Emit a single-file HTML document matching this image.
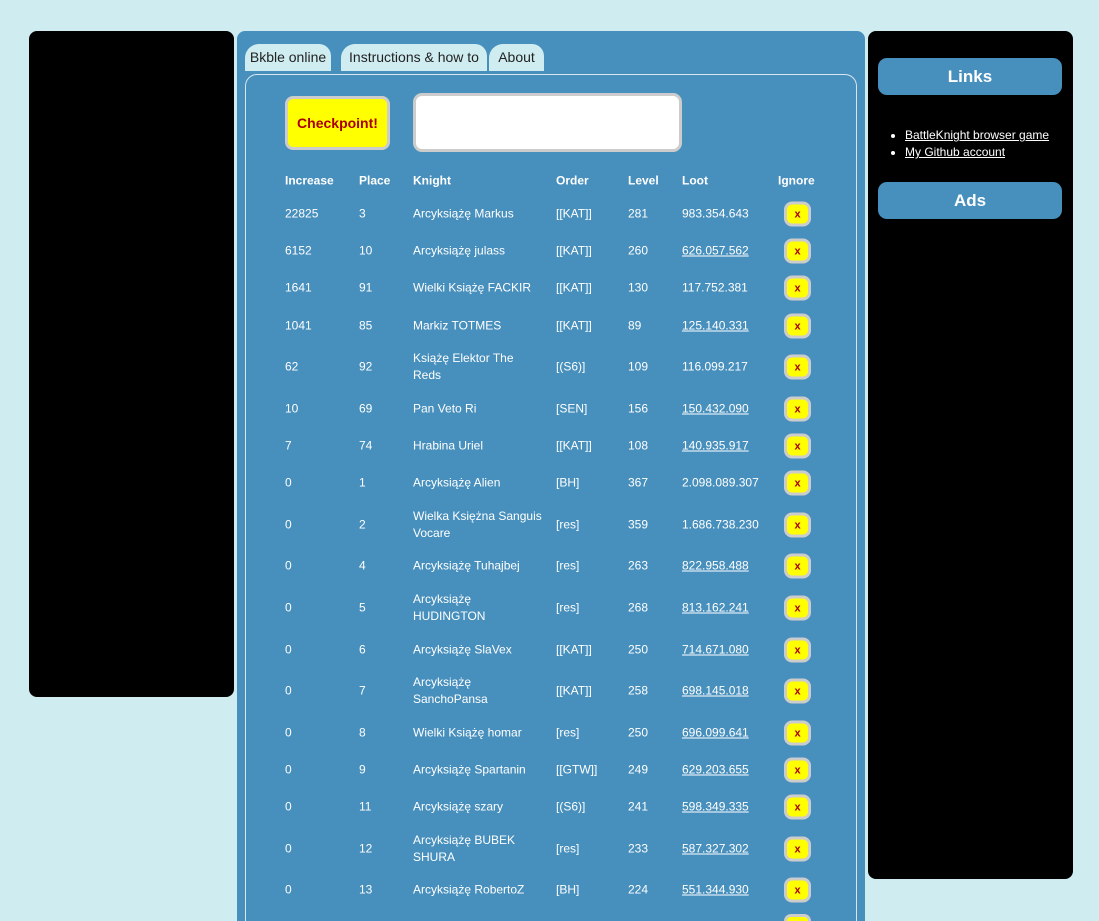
<!DOCTYPE html>
<html style="overflow:hidden;height:921px"><head><meta charset="utf-8"><style>
html,body{overflow:hidden;}
body{margin:0;width:1099px;height:921px;background:#cfedf1;position:relative;font-family:"Liberation Sans",sans-serif;}
#wrap{position:absolute;left:0;top:0;width:1099px;height:921px;overflow:hidden;}
.blk{position:absolute;background:#000;border-radius:8px;}
#main{position:absolute;left:237px;top:31px;width:628px;height:890px;background:#478fbc;border-radius:8px 8px 0 0;overflow:hidden;}
.tab{position:absolute;top:13px;height:27px;background:#cfedf1;border-radius:14px 12px 0 0;font:14px "Liberation Sans",sans-serif;color:#222;line-height:27px;text-align:center;white-space:nowrap;}
#inner{position:absolute;left:8px;top:43px;width:610px;height:846px;border:1px solid #d8e6ee;border-bottom:none;border-radius:12px 12px 0 0;}
.cp{position:absolute;left:285px;top:96px;width:99px;height:48px;background:#ff0;border:3px solid #ccc;border-radius:8px;color:#a00;font:bold 14px "Liberation Sans",sans-serif;text-align:center;line-height:48px;}
.inp{position:absolute;left:413px;top:93px;width:263px;height:53px;background:#fff;border:3px solid #ccc;border-radius:9px;}
.c{position:absolute;color:#fff;font-size:12px;line-height:17px;transform:translateY(-50%);white-space:nowrap;}
.h{font-weight:bold;}
.u{text-decoration:underline;}
.x{position:absolute;left:784px;width:21px;height:19px;background:#ff0;border:3px solid #ccc;border-radius:8px;color:#a00;font:bold 11px "Liberation Sans",sans-serif;text-align:center;line-height:20px;transform:translateY(-50%);}
.xp{position:absolute;left:784px;top:914px;width:21px;height:4px;background:#ff0;border:3px solid #ccc;border-bottom:none;border-radius:8px 8px 0 0;}
.side{position:absolute;left:878px;width:184px;height:37px;background:#478fbc;border-radius:9px;color:#fff;font-weight:bold;font-size:17px;text-align:center;line-height:37px;}
ul{position:absolute;left:868px;top:127px;margin:0;padding-left:37px;color:#fff;font-size:12px;line-height:17px;}
ul a{color:#fff;text-decoration:underline;}
</style></head><body><div id="wrap">
<div class="blk" style="left:29px;top:31px;width:205px;height:666px"></div>
<div class="blk" style="left:868px;top:31px;width:205px;height:848px"></div>
<div id="main">
<div class="tab" style="left:8px;width:86px">Bkble online</div>
<div class="tab" style="left:104px;width:146px">Instructions &amp; how to</div>
<div class="tab" style="left:252px;width:55px">About</div>
<div id="inner"></div>
</div>
<div class="cp">Checkpoint!</div>
<div class="inp"></div>
<div class="side" style="top:58px">Links</div>
<ul><li><a>BattleKnight browser game</a></li><li><a>My Github account</a></li></ul>
<div class="side" style="top:182px">Ads</div>
<div id="rows"></div>
<div class="xp"></div>
</div>
<script>
var R=[
["Increase","Place","Knight","Order","Level","Loot","Ignore",181,1],
["22825","3","Arcyksiążę Markus","[[KAT]]","281","983.354.643",0,214],
["6152","10","Arcyksiążę julass","[[KAT]]","260","626.057.562",1,251],
["1641","91","Wielki Książę FACKIR","[[KAT]]","130","117.752.381",0,288],
["1041","85","Markiz TOTMES","[[KAT]]","89","125.140.331",1,326],
["62","92","Książę Elektor The<br>Reds","[(S6)]","109","116.099.217",0,367],
["10","69","Pan Veto Ri","[SEN]","156","150.432.090",1,409],
["7","74","Hrabina Uriel","[[KAT]]","108","140.935.917",1,446],
["0","1","Arcyksiążę Alien","[BH]","367","2.098.089.307",0,483],
["0","2","Wielka Księżna Sanguis<br>Vocare","[res]","359","1.686.738.230",0,525],
["0","4","Arcyksiążę Tuhajbej","[res]","263","822.958.488",1,566],
["0","5","Arcyksiążę<br>HUDINGTON","[res]","268","813.162.241",1,608],
["0","6","Arcyksiążę SlaVex","[[KAT]]","250","714.671.080",1,650],
["0","7","Arcyksiążę<br>SanchoPansa","[[KAT]]","258","698.145.018",1,691],
["0","8","Wielki Książę homar","[res]","250","696.099.641",1,733],
["0","9","Arcyksiążę Spartanin","[[GTW]]","249","629.203.655",1,770],
["0","11","Arcyksiążę szary","[(S6)]","241","598.349.335",1,807],
["0","12","Arcyksiążę BUBEK<br>SHURA","[res]","233","587.327.302",1,849],
["0","13","Arcyksiążę RobertoZ","[BH]","224","551.344.930",1,890]];
var X=[285,359,413,556,628,682,778],h="";
R.forEach(function(r){var t=r[7],hd=r[8];
for(var i=0;i<6;i++){if(r[i]==="")continue;
h+='<div class="c'+(hd?' h':'')+(i==5&&r[6]===1?' u':'')+'" style="left:'+X[i]+'px;top:'+t+'px">'+r[i]+'</div>';}
if(hd)h+='<div class="c h" style="left:778px;top:'+t+'px">Ignore</div>';
else h+='<div class="x" style="top:'+t+'px">x</div>';});
document.getElementById('rows').innerHTML=h;
</script>
</body></html>
